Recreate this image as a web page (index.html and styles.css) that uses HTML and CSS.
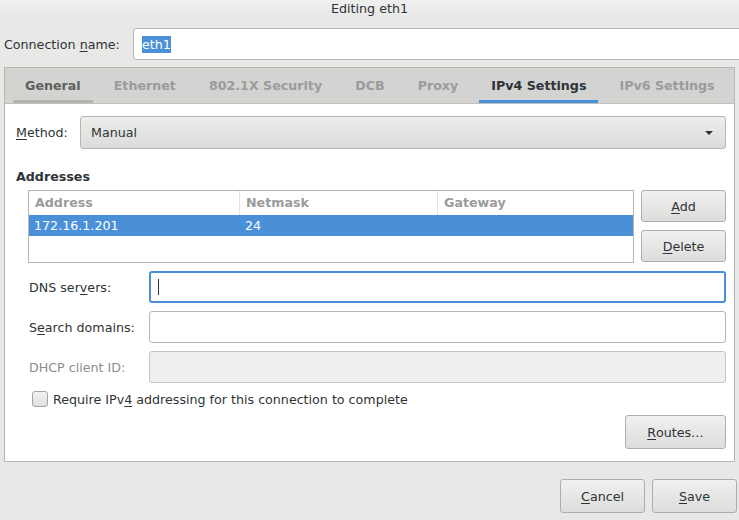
FILE: index.html
```html
<!DOCTYPE html>
<html>
<head>
<meta charset="utf-8">
<link rel="stylesheet" href="styles.css">
</head>
<body>
<div class="window">
  <div class="titlebar">Editing eth1</div>
  <div class="name-row">
    <label class="name-label">Connection <u>n</u>ame:</label>
    <div class="entry name-entry"><span class="sel">eth1</span></div>
  </div>
  <div class="notebook">
    <div class="tabs">
      <div class="tab hover">General</div>
      <div class="tab">Ethernet</div>
      <div class="tab">802.1X Security</div>
      <div class="tab">DCB</div>
      <div class="tab">Proxy</div>
      <div class="tab active">IPv4 Settings</div>
      <div class="tab">IPv6 Settings</div>
    </div>
    <div class="page">
      <div class="method-row">
        <label class="method-label"><u>M</u>ethod:</label>
        <div class="combo">
          <span>Manual</span>
          <svg class="arrow" width="10" height="6" viewBox="0 0 10 6"><path d="M1 1h8l-4 4z" fill="#2e3436"/></svg>
        </div>
      </div>
      <div class="section-title">Addresses</div>
      <div class="addr-row">
        <div class="table">
          <div class="thead">
            <div class="th c1">Address</div>
            <div class="th c2">Netmask</div>
            <div class="th c3">Gateway</div>
          </div>
          <div class="tr selected">
            <div class="td c1">172.16.1.201</div>
            <div class="td c2">24</div>
            <div class="td c3"></div>
          </div>
        </div>
        <div class="addr-buttons">
          <div class="button"><u>A</u>dd</div>
          <div class="button"><u>D</u>elete</div>
        </div>
      </div>
      <div class="form">
        <label class="flabel">DNS ser<u>v</u>ers:</label>
        <div class="entry focus"><span class="cursor"></span></div>
        <label class="flabel">S<u>e</u>arch domains:</label>
        <div class="entry"></div>
        <label class="flabel disabled">DHCP client ID:</label>
        <div class="entry insensitive"></div>
      </div>
      <div class="check-row">
        <span class="checkbox"></span>
        <span class="check-label">Require IPv<u>4</u> addressing for this connection to complete</span>
      </div>
      <div class="routes-row">
        <div class="button routes"><u>R</u>outes…</div>
      </div>
    </div>
  </div>
  <div class="action-row">
    <div class="button action"><u>C</u>ancel</div>
    <div class="button action"><u>S</u>ave</div>
  </div>
</div>
</body>
</html>
```

FILE: styles.css
```css
html, body {
  margin: 0;
  padding: 0;
}
body {
  width: 739px;
  height: 520px;
  overflow: hidden;
  background: #e8e8e7;
  font-family: "DejaVu Sans", sans-serif;
  font-size: 12.67px;
  color: #2e3436;
}
u {
  text-decoration: underline;
  text-underline-offset: 2px;
}
.window {
  display: flex;
  flex-direction: column;
}
.titlebar {
  height: 18px;
  text-align: center;
  line-height: 18px;
  color: #2e3436;
  background: linear-gradient(#efefef, #e8e8e7);
  margin-bottom: 10px;
  white-space: nowrap;
}
.name-row {
  display: flex;
  align-items: center;
  padding-left: 4px;
  white-space: nowrap;
}
.name-label {
  width: 129px;
}
.entry {
  box-sizing: border-box;
  height: 32px;
  background: #fff;
  border: 1px solid #b6b6b3;
  border-radius: 3px;
  display: flex;
  align-items: center;
  padding-left: 8px;
}
.name-entry {
  flex: 1;
  margin-right: -3px;
}
.sel {
  background: #4a90d9;
  color: #fff;
  line-height: 17px;
}
.notebook {
  margin: 7px 4px 0 4px;
  border: 1px solid #b6b6b3;
  background: #fff;
  height: 395px;
  box-sizing: border-box;
  display: flex;
  flex-direction: column;
}
.tabs {
  display: flex;
  height: 36px;
  background: #d3d3d2;
  border-bottom: 1px solid #c0c0bd;
  padding-left: 8px;
  box-sizing: border-box;
  white-space: nowrap;
}
.tab {
  padding: 0 12px;
  margin-right: 9px;
  font-weight: bold;
  color: #9a9c9b;
  display: flex;
  align-items: center;
  border-bottom: 3px solid transparent;
  padding-top: 3px;
  flex: none;
}
.tab.hover {
  color: #5d5f5e;
  border-bottom-color: #b4b4b2;
}
.tab.active {
  color: #2e3436;
  border-bottom-color: #4a90d9;
}
.page {
  padding: 12px 8px 0 11px;
  display: flex;
  flex-direction: column;
}
.method-row {
  display: flex;
  align-items: center;
}
.method-label {
  width: 64px;
}
.combo {
  flex: 1;
  height: 33px;
  box-sizing: border-box;
  border: 1px solid #b6b6b3;
  border-radius: 3px;
  background: linear-gradient(#ededec, #dcdcdb);
  display: flex;
  align-items: center;
  justify-content: space-between;
  padding: 0 11px 0 10px;
}
.section-title {
  font-weight: bold;
  margin-top: 20px;
  line-height: 16px;
}
.addr-row {
  display: flex;
  margin-top: 5px;
  margin-left: 12px;
  gap: 7px;
}
.table {
  width: 606px;
  height: 73px;
  box-sizing: border-box;
  border: 1px solid #b6b6b3;
  background: #fff;
}
.thead, .tr {
  display: flex;
}
.thead {
  height: 24px;
}
.th {
  box-sizing: border-box;
  font-weight: bold;
  color: #9a9c9b;
  padding: 1px 0 0 6px;
  line-height: 22px;
  border-right: 1px solid #e4e4e3;
}
.th.c3 { border-right: none; }
.c1 { width: 211px; }
.c2 { width: 198px; }
.c3 { flex: 1; }
.tr.selected {
  background: #4a90d9;
  color: #fff;
  height: 21px;
}
.td {
  box-sizing: border-box;
  padding: 1px 0 0 5px;
  line-height: 20px;
}
.addr-buttons {
  display: flex;
  flex-direction: column;
  gap: 8px;
}
.button {
  box-sizing: border-box;
  height: 32px;
  width: 85px;
  border: 1px solid #adadab;
  border-radius: 3px;
  background: linear-gradient(#f0f0ef, #dddddc);
  display: flex;
  align-items: center;
  justify-content: center;
  color: #2e3436;
  white-space: nowrap;
}
.form {
  display: grid;
  grid-template-columns: 120px 1fr;
  row-gap: 8px;
  margin-top: 8px;
  margin-left: 13px;
  align-items: center;
}
.flabel.disabled {
  color: #8b8e8f;
}
.entry.focus {
  border: 2px solid #4a90d9;
  padding-left: 7px;
}
.cursor {
  width: 1px;
  height: 16px;
  background: #2e3436;
}
.entry.insensitive {
  background: #efefee;
  border-color: #c5c5c3;
}
.check-row {
  display: flex;
  align-items: center;
  margin-top: 8px;
  margin-left: 16px;
  gap: 5px;
  white-space: nowrap;
}
.checkbox {
  width: 14px;
  height: 14px;
  border: 1px solid #a3a3a1;
  border-radius: 3px;
  background: linear-gradient(#f4f4f3, #e0e0df);
}
.routes-row {
  display: flex;
  justify-content: flex-end;
  margin-top: 8px;
}
.button.routes {
  width: 101px;
  height: 34px;
}
.action-row {
  display: flex;
  justify-content: flex-end;
  gap: 7px;
  margin-top: 17px;
  padding-right: 2px;
}
.button.action {
  width: 85px;
  height: 34px;
}
```
